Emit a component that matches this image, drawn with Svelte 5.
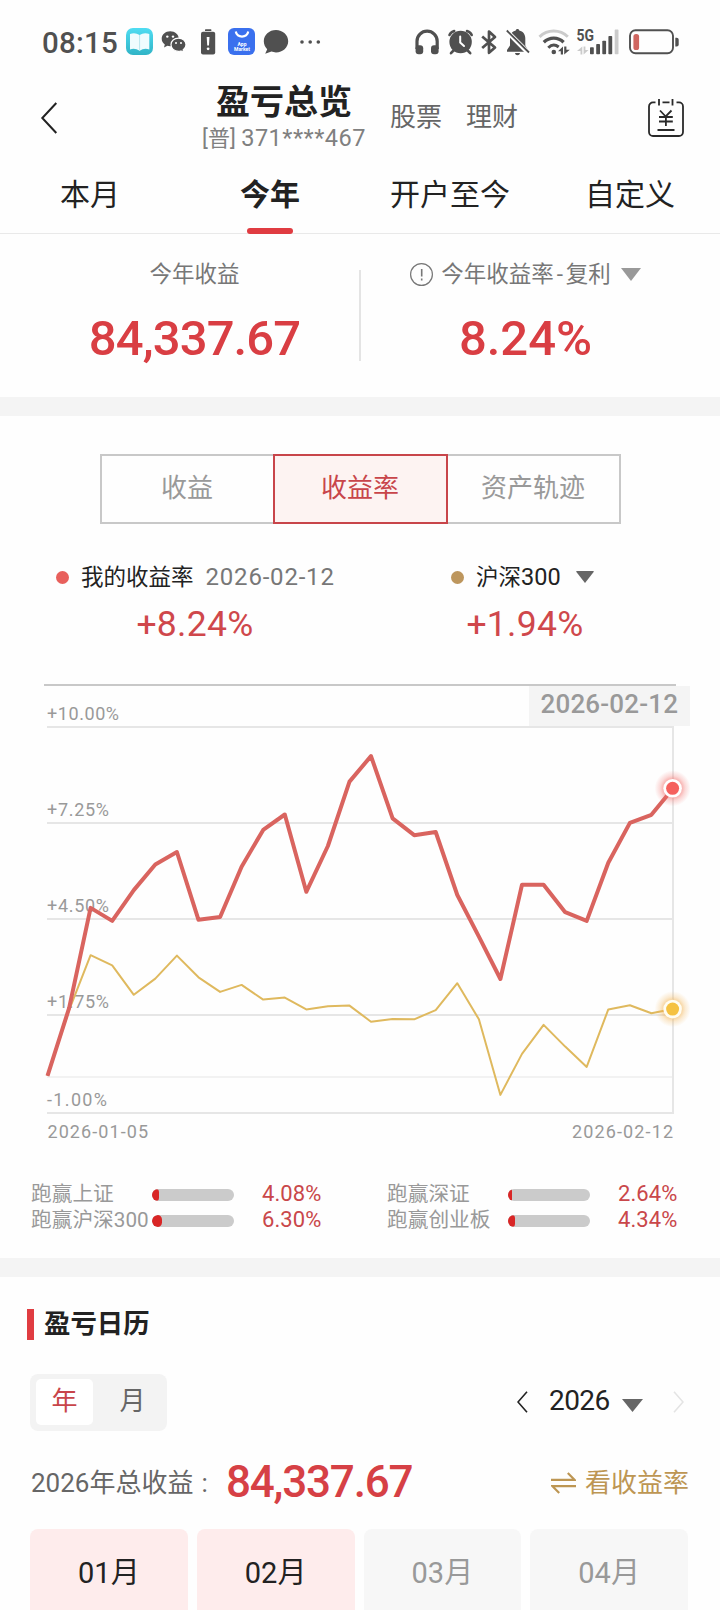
<script lang="ts">
	interface Beat {
		label: string;
		value: number;
	}

	interface Month {
		label: string;
		active: boolean;
	}

	const tabs = ['本月', '今年', '开户至今', '自定义'];
	let activeTab = $state('今年');

	const modes = ['收益', '收益率', '资产轨迹'];
	let activeMode = $state('收益率');

	const units = ['年', '月'];
	let activeUnit = $state('年');

	const beats: Beat[] = [
		{ label: '跑赢上证', value: 4.08 },
		{ label: '跑赢深证', value: 2.64 },
		{ label: '跑赢沪深300', value: 6.3 },
		{ label: '跑赢创业板', value: 4.34 }
	];

	const months: Month[] = [
		{ label: '01', active: true },
		{ label: '02', active: true },
		{ label: '03', active: false },
		{ label: '04', active: false }
	];

	// Daily cumulative return, in percent
	const mine = [
		0.03, 1.97, 4.83, 4.46, 5.34, 6.07, 6.43, 4.49, 4.57, 6.01, 7.06, 7.5, 5.29, 6.6, 8.44,
		9.17, 7.39, 6.91, 7.0, 5.2, 4.01, 2.8, 5.49, 5.49, 4.71, 4.46, 6.12, 7.26, 7.49, 8.24
	];
	const index = [
		0.03, 1.91, 3.48, 3.19, 2.35, 2.81, 3.47, 2.85, 2.43, 2.63, 2.21, 2.27, 1.93, 2.02, 2.04,
		1.58, 1.66, 1.65, 1.91, 2.68, 1.65, -0.51, 0.66, 1.49, 0.87, 0.29, 1.93, 2.05, 1.82, 1.94
	];

	// Chart geometry
	const left = 47.5;
	const right = 673;
	const zeroY = 393;
	const perPercent = 35;

	const grid = [
		{ y: 43, label: '+10.00%', width: 72 },
		{ y: 139, label: '+7.25%', width: 62 },
		{ y: 235, label: '+4.50%', width: 62 },
		{ y: 331, label: '+1.75%', width: 62 },
		{ y: 429, label: '-1.00%', width: 60 }
	];

	const px = (i: number) => left + (i * (right - left)) / (mine.length - 1);
	const py = (v: number) => zeroY - v * perPercent;
	const toPoints = (values: number[]) => values.map((v, i) => `${px(i).toFixed(1)},${py(v).toFixed(1)}`).join(' ');

	let minePoints = $derived(toPoints(mine));
	let indexPoints = $derived(toPoints(index));
</script>

<div class="page">
	<div class="status">
		<span class="time">08:15</span>
		<div class="icons">
			<svg width="27" height="30" viewBox="0 0 27 30">
				<defs>
					<linearGradient id="book" x1="0" y1="0" x2="0" y2="1">
						<stop offset="0" stop-color="#4fdcf2" />
						<stop offset="1" stop-color="#30b4c6" />
					</linearGradient>
				</defs>
				<rect y="1" width="27" height="27" rx="7" fill="url(#book)" />
				<path d="M4 7 Q9 5 13.6 8 Q18 5 23.3 7 V22.4 Q18 20.6 13.6 23.8 Q9 20.6 4 22.4Z" fill="#effcfe" />
				<path d="M13.6 8 V23.8" stroke="#b9e6ee" stroke-width="1" />
			</svg>
			<svg width="26" height="30" viewBox="0 0 26 30" fill="#505050">
				<path d="M9.2 4.3C4.4 4.3.7 7.6.7 11.8c0 2.4 1.2 4.4 3.1 5.7L3 20.6l3.4-1.8c.9.2 1.8.4 2.8.4 4.8 0 8.6-3.2 8.6-7.4S14 4.3 9.2 4.3Z" />
				<path d="M17.5 11.2c-4.3 0-7.5 2.8-7.5 6.5s3.2 6.6 7.5 6.6c.9 0 1.7-.1 2.4-.3l2.9 1.6-.7-2.6c1.7-1.2 2.9-3.1 2.9-5.3 0-3.7-3.2-6.5-7.5-6.5Z" stroke="#fff" stroke-width="1.2" />
				<circle cx="6.3" cy="9.6" r="1.2" fill="#fff" />
				<circle cx="12" cy="9.6" r="1.2" fill="#fff" />
				<circle cx="15" cy="16" r="1" fill="#fff" />
				<circle cx="20" cy="16" r="1" fill="#fff" />
			</svg>
			<svg width="25" height="30" viewBox="0 0 25 30" fill="#505050">
				<rect x="10" y="2.3" width="6.4" height="1.8" rx=".6" />
				<rect x="6" y="4.8" width="14.2" height="22.8" rx="2" />
				<path d="M11.7 10h2.8l-.5 8.5h-1.8Z" fill="#fff" />
				<circle cx="13.1" cy="21.8" r="1.4" fill="#fff" />
			</svg>
			<svg width="27" height="30" viewBox="0 0 27 30">
				<rect y="1" width="27" height="27" rx="6" fill="#3a70ee" />
				<path d="M7.8 4.5C8.6 11.3 19.4 11.3 20.2 4.5" fill="none" stroke="#fff" stroke-width="2.2" />
				<text class="tiny" x="14" y="18.5" text-anchor="middle">App</text>
				<text class="tiny" x="14" y="24" text-anchor="middle">Market</text>
			</svg>
			<svg width="26" height="30" viewBox="0 0 26 30" fill="#505050">
				<path d="M13 3C6.2 3 .8 7.9.8 14.2c0 3.3 1.4 6 3.4 8L2.2 26.8l6.2-2.2c1.4.5 3 .8 4.6.8 6.8 0 12.2-5 12.2-11.2S19.8 3 13 3Z" />
			</svg>
			<svg width="26" height="30" viewBox="0 0 26 30" fill="#505050">
				<circle cx="5" cy="15" r="1.8" />
				<circle cx="13.2" cy="15" r="1.8" />
				<circle cx="21.3" cy="15" r="1.8" />
			</svg>
		</div>
		<div class="icons end">
			<svg width="25" height="30" viewBox="0 0 25 30" fill="#505050">
				<path d="M2 22V14.2a10 10 0 0 1 20.2 0V22" fill="none" stroke="#505050" stroke-width="3.2" />
				<rect x=".6" y="18.2" width="7.6" height="9" rx="3" />
				<rect x="16" y="18.2" width="7.6" height="9" rx="3" />
			</svg>
			<svg width="25" height="30" viewBox="0 0 25 30">
				<g stroke="#505050" stroke-width="2.6" stroke-linecap="round" fill="none">
					<path d="M1.5 8A7 7 0 0 1 6.2 4M19 4a7 7 0 0 1 4.7 4M5.5 23.5 3 26.2M19.7 23.5l2.5 2.7" />
				</g>
				<circle cx="12.6" cy="15" r="11.2" fill="#505050" />
				<path d="M12.2 9.5V15.6L16 19" fill="none" stroke="#fff" stroke-width="2" stroke-linecap="round" />
			</svg>
			<svg width="16" height="30" viewBox="0 0 16 30">
				<path d="M1.2 9.5 14 20.5 8 25.8V4.5L14 10 1.2 21" fill="none" stroke="#505050" stroke-width="2.7" stroke-linejoin="round" />
			</svg>
			<svg width="25" height="30" viewBox="0 0 25 30" fill="#505050">
				<path d="M12.5 2c1 0 1.7.7 1.7 1.6 4 .9 6.1 4 6.1 8V18.5l2.6 4.5v1.8H2v-1.8l3-4.5V11.6c0-4 2-7.1 5.8-8C10.8 2.7 11.5 2 12.5 2ZM10 26h5c-.3 1.5-1.2 2.2-2.5 2.2S10.3 27.5 10 26Z" />
				<path d="M1.5 4 23.5 26" stroke="#fff" stroke-width="4.6" />
				<path d="M1.8 3.5 24 25.5" stroke="#505050" stroke-width="1.8" />
			</svg>
			<svg width="32" height="30" viewBox="0 0 32 30" fill="none">
				<path d="M1.5 9.8C9.5 2.2 22 2.2 29.8 9.8" stroke="#cbcbcb" stroke-width="3" />
				<path d="M5.8 15.3C11.5 9.8 20 9.8 25.6 15.3" stroke="#505050" stroke-width="3.3" />
				<path d="M10.3 20.8C13.5 17.5 17.5 17.5 20.7 20" stroke="#505050" stroke-width="3" />
				<circle cx="15.8" cy="25" r="2.3" fill="#505050" />
				<path d="M20 24.2 25 19.5V27.5H22.8V24.2ZM26.2 19.5H28.4V22.8H31.8L26.2 27.6Z" fill="#505050" />
			</svg>
			<svg width="41" height="30" viewBox="0 0 41 30">
				<text class="net" x="-1.5" y="14" textLength="17.5" lengthAdjust="spacingAndGlyphs">5G</text>
				<path d="M-1 24 4.3 19.5V27.5H2.5V24ZM5.6 19.5H7.4V23H10.5L5.6 27.5Z" fill="#cbcbcb" />
				<g fill="#505050">
					<rect x="12" y="20.3" width="3.8" height="7" rx=".8" />
					<rect x="18.2" y="17" width="3.8" height="10.3" rx=".8" />
					<rect x="24.3" y="13.7" width="3.8" height="13.6" rx=".8" />
					<rect x="30.4" y="9" width="3.8" height="18.3" rx=".8" />
				</g>
				<rect x="36.7" y="2.6" width="3.8" height="24.7" rx=".8" fill="#cbcbcb" />
			</svg>
			<svg width="53" height="30" viewBox="0 0 53 30">
				<rect x="3" y="3.3" width="43" height="23" rx="5.5" fill="none" stroke="#505050" stroke-width="1.9" />
				<rect x="6.4" y="7" width="5.7" height="16" rx="2.6" fill="#cf6660" />
				<path d="M48.3 10.8h1.4a2 2 0 0 1 2 2v4.8a2 2 0 0 1-2 2h-1.4Z" fill="#505050" />
			</svg>
		</div>
	</div>

	<header class="header">
		<svg width="18" height="34" viewBox="0 0 18 34">
			<path d="M16.3 2 2.3 17 16.3 32" fill="none" stroke="#222" stroke-width="2" />
		</svg>
		<div class="heading">
			<h1>盈亏总览</h1>
			<span class="account">[普] <span class="digits">371****467</span></span>
		</div>
		<nav class="links">
			<span>股票</span>
			<span>理财</span>
		</nav>
		<svg class="bill" width="36" height="38" viewBox="0 0 36 38" fill="none" stroke="#2a2a2a" stroke-width="1.8">
			<path d="M7.5 3.4H5A4 4 0 0 0 1 7.4V33a4 4 0 0 0 4 4H31a4 4 0 0 0 4-4V7.4a4 4 0 0 0-4-4H28.5M14.5 3.4H21.5" />
			<path d="M11 0V6.5M24.5 0V6.5M12 11.5 17.7 17.5 23.5 11.5M11 18H24.8M11 22.5H24.8M17.9 17.5V27M9.5 31H26.5" />
		</svg>
	</header>

	<div class="tabs">
		{#each tabs as tab}
			<button class="tab" class:active={tab === activeTab} onclick={() => (activeTab = tab)}>{tab}</button>
		{/each}
	</div>

	<section class="summary">
		<div class="metric">
			<div class="metric-label">今年收益</div>
			<div class="metric-value">84,337.67</div>
		</div>
		<div class="divider"></div>
		<div class="metric">
			<div class="metric-label">
				<svg class="info" width="23" height="23" viewBox="0 0 23 23" fill="none" stroke="#777">
					<circle cx="11.5" cy="11.5" r="10.9" stroke-width="1.2" />
					<path d="M11.7 6V13.5M11.7 15.5V17.5" stroke-width="1.6" />
				</svg>
				<span>今年收益率<span class="dash">-</span>复利</span>
				<svg class="caret" width="20" height="13" viewBox="0 0 20 13"><path d="M0 0H20L10 13Z" fill="#999" /></svg>
			</div>
			<div class="metric-value rate">8.24%</div>
		</div>
	</section>

	<div class="band"></div>

	<section class="returns">
		<div class="segments">
			{#each modes as mode}
				<button class="segment" class:active={mode === activeMode} onclick={() => (activeMode = mode)}>{mode}</button>
			{/each}
		</div>

		<div class="legend">
			<div class="series">
				<div class="series-name">
					<span class="dot mine"></span>
					<span>我的收益率</span>
					<span class="series-date">2026-02-12</span>
				</div>
				<div class="series-value">+8.24%</div>
			</div>
			<div class="series">
				<div class="series-name other">
					<span class="dot index"></span>
					<span>沪深<span class="code">300</span></span>
					<svg width="18" height="12" viewBox="0 0 18 12"><path d="M0 .5 1 0H17L18 .5 9 12Z" fill="#666" /></svg>
				</div>
				<div class="series-value">+1.94%</div>
			</div>
		</div>

		<svg class="chart" width="720" height="470" viewBox="0 0 720 470">
			<defs>
				<radialGradient id="glow-red">
					<stop offset=".45" stop-color="#f26a66" stop-opacity=".6" />
					<stop offset=".7" stop-color="#f26a66" stop-opacity=".25" />
					<stop offset="1" stop-color="#f26a66" stop-opacity="0" />
				</radialGradient>
				<radialGradient id="glow-gold">
					<stop offset=".45" stop-color="#f2b04c" stop-opacity=".6" />
					<stop offset=".7" stop-color="#f2b04c" stop-opacity=".25" />
					<stop offset="1" stop-color="#f2b04c" stop-opacity="0" />
				</radialGradient>
			</defs>
			<rect x="44" y="0" width="632" height="2" fill="#c8c8c8" />
			{#each grid as line}
				<rect x="47" y={line.y - 1} width="626" height="2" fill="#e6e6e6" />
				<text class="axis" x="47" y={line.y - 7} textLength={line.width}>{line.label}</text>
			{/each}
			<rect x="47" y="392" width="626" height="2" fill="#f2f2f2" />
			<rect x="672" y="42" width="2" height="388" fill="#e6e6e6" />
			<text class="axis" x="47.5" y="453.5" textLength="100.5">2026-01-05</text>
			<text class="axis" x="572" y="453.5" textLength="101">2026-02-12</text>

			<polyline points={indexPoints} fill="none" stroke="#dfb95e" stroke-width="2" stroke-linejoin="round" />
			<polyline points={minePoints} fill="none" stroke="#d9645f" stroke-width="4" stroke-linejoin="round" />

			<rect x="529" y="2" width="161" height="40" fill="#f4f4f4" />
			<text class="flag" x="540.5" y="29" textLength="137.5">2026-02-12</text>

			<circle cx="672.6" cy={py(8.24) - 0.3} r="18" fill="url(#glow-red)" />
			<circle cx="672.6" cy={py(8.24) - 0.3} r="9.3" fill="#fff" />
			<circle cx="672.6" cy={py(8.24) - 0.3} r="6.5" fill="#f5605d" />
			<circle cx="672.6" cy={py(1.94)} r="18" fill="url(#glow-gold)" />
			<circle cx="672.6" cy={py(1.94)} r="9.3" fill="#fffdf2" />
			<circle cx="672.6" cy={py(1.94)} r="6.5" fill="#f5c242" />
		</svg>

		<div class="beats">
			{#each beats as beat}
				<div class="beat">
					<span class="beat-label">{beat.label}</span>
					<div class="track"><div class="fill" style="width: {beat.value * 2}%"></div></div>
					<span class="beat-value">{beat.value.toFixed(2)}%</span>
				</div>
			{/each}
		</div>
	</section>

	<div class="band"></div>

	<section class="calendar">
		<h2><span>盈亏日历</span></h2>

		<div class="controls">
			<div class="toggle">
				{#each units as unit}
					<button class="unit" class:active={unit === activeUnit} onclick={() => (activeUnit = unit)}>{unit}</button>
				{/each}
			</div>
			<div class="year">
				<svg width="11" height="22" viewBox="0 0 11 22"><path d="M10 .8 1 11 10 21.2" fill="none" stroke="#222" stroke-width="1.6" /></svg>
				<span class="year-text">2026</span>
				<svg class="year-caret" width="21" height="13" viewBox="0 0 21 13"><path d="M0 0H21L10.5 13Z" fill="#666" /></svg>
				<svg class="next" width="11" height="22" viewBox="0 0 11 22"><path d="M1 .8 10 11 1 21.2" fill="none" stroke="#e4e4e4" stroke-width="1.6" /></svg>
			</div>
		</div>

		<div class="total">
			<span class="total-label">2026年总收益<span class="colon">:</span></span>
			<span class="total-value">84,337.67</span>
			<span class="switch">
				<svg width="25" height="22" viewBox="0 0 25 22" fill="none" stroke="#bd9653" stroke-width="2.2">
					<path d="M0 7.8H23.5L16.8 1M25 14.2H1.5L8.2 21" />
				</svg>
				<span>看收益率</span>
			</span>
		</div>

		<div class="months">
			{#each months as month}
				<div class="month" class:active={month.active}>{month.label}月</div>
			{/each}
		</div>
	</section>
</div>

<style>
	:global(body) {
		margin: 0;
		background: #fefefe;
	}

	.page {
		width: 720px;
		height: 1610px;
		overflow: hidden;
		background: #fefefe;
		color: #222;
		font-family: Roboto, 'Noto Sans CJK SC', sans-serif;
	}

	svg {
		display: block;
		flex-shrink: 0;
	}

	button {
		padding: 0;
		border: none;
		background: none;
		color: inherit;
		font: inherit;
	}

	h1,
	h2 {
		margin: 0;
	}

	/* Status bar */
	.status {
		display: flex;
		align-items: flex-start;
		height: 80px;
		padding: 27px 40px 0 42px;
		box-sizing: border-box;
	}

	.time {
		width: 84px;
		line-height: 32px;
		font-size: 29.5px;
		font-weight: 500;
		letter-spacing: 0.2px;
		color: #505050;
	}

	.icons {
		display: flex;
		gap: 8px;
	}

	.icons.end { margin-left: auto; }

	.icons svg { overflow: visible; }

	.tiny {
		fill: #fff;
		font-size: 5px;
		font-weight: 700;
	}

	.net {
		fill: #505050;
		font-size: 16px;
		font-weight: 700;
	}

	/* Header */
	.header {
		display: flex;
		align-items: center;
		height: 76px;
		padding: 0 36px 0 40px;
	}

	.heading {
		display: flex;
		flex-direction: column;
		align-items: center;
		width: 168px;
		margin-left: 142px;
		padding-top: 2px;
		white-space: nowrap;
	}

	h1 {
		line-height: 38px;
		font-size: 34px;
		font-weight: 700;
	}

	.account {
		line-height: 34px;
		font-size: 22px;
		color: #808080;
	}

	.digits {
		font-size: 23.5px;
		letter-spacing: 0.5px;
	}

	.links {
		display: flex;
		gap: 24px;
		margin-left: 22px;
		padding-bottom: 7px;
		font-size: 26px;
		color: #666;
	}

	.bill { margin-left: auto; }

	.tabs {
		display: grid;
		grid-template-columns: repeat(4, 1fr);
		height: 77px;
		border-bottom: 1px solid #e9e9e9;
	}

	.tab {
		display: flex;
		flex-direction: column;
		align-items: center;
		justify-content: space-between;
		height: 78px;
		line-height: 77px;
		font-size: 30px;
	}

	.tab.active { font-weight: 700; }

	.tab.active::after {
		content: '';
		width: 46px;
		height: 6px;
		margin-top: -5px;
		border-radius: 3px;
		background: #e03c41;
	}

	/* Summary */
	.summary {
		display: flex;
		height: 163px;
		padding: 0 30px;
		box-sizing: border-box;
	}

	.metric {
		flex: 1;
		padding-top: 20px;
		text-align: center;
	}

	.metric-label {
		display: flex;
		align-items: center;
		justify-content: center;
		height: 40px;
		line-height: 38px;
		padding-bottom: 1px;
		box-sizing: border-box;
		font-size: 22.5px;
		color: #777;
	}

	.info {
		margin-top: 1px;
		margin-right: 8px;
	}

	.caret {
		margin-top: 1px;
		margin-left: 10px;
	}

	.dash { padding: 0 3px; }

	.metric-value {
		height: 60px;
		margin-top: 15px;
		line-height: 60px;
		font-size: 49px;
		font-weight: 500;
		letter-spacing: -0.9px;
		color: #d93e43;
	}

	.metric-value.rate { letter-spacing: 0; }

	.divider {
		width: 2px;
		height: 91px;
		margin-top: 36px;
		background: #e4e4e4;
	}

	.band {
		height: 19px;
		background: #f4f4f4;
	}

	/* Returns */
	.returns {
		height: 842px;
		padding-top: 38px;
		box-sizing: border-box;
	}

	.segments {
		display: grid;
		grid-template-columns: 173px 175px 173px;
		justify-content: center;
		height: 70px;
	}

	.segment {
		padding-bottom: 7px;
		border: 2px solid #c8c8c8;
		font-size: 26px;
		color: #999;
	}

	.segment:first-child { border-right: none; }

	.segment:last-child { border-left: none; }

	.segment.active {
		border-color: #c8454a;
		background: #fdf3f2;
		color: #c8454a;
	}

	.legend {
		display: grid;
		grid-template-columns: 330px 330px;
		justify-content: center;
		height: 160px;
		padding-top: 33px;
		box-sizing: border-box;
	}

	.series-name {
		display: flex;
		align-items: center;
		height: 40px;
		line-height: 38px;
		padding-left: 26px;
		font-size: 22.5px;
		white-space: nowrap;
	}

	.series-name.other { padding-left: 91px; }

	.series-name svg { margin-left: 15px; }

	.code { font-size: 23.5px; }

	.dot {
		width: 13px;
		height: 13px;
		margin-right: 12px;
		border-radius: 50%;
	}

	.dot.mine { background: #e8605c; }
	.dot.index { background: #bd965d; }

	.series-date {
		margin-left: 12px;
		font-size: 24px;
		letter-spacing: 0.8px;
		color: #777;
	}

	.series-value {
		line-height: 54px;
		font-size: 35.5px;
		letter-spacing: 0.3px;
		text-align: center;
		color: #cf474b;
	}

	.axis {
		fill: #999;
		font-size: 18px;
	}

	.flag {
		fill: #999;
		font-size: 26px;
		font-weight: 500;
	}

	.beats {
		display: grid;
		grid-template-columns: 356px 356px;
		padding: 27px 0 0 31px;
	}

	.beat {
		display: flex;
		align-items: center;
		height: 26px;
		line-height: 26px;
		white-space: nowrap;
	}

	.beat-label {
		width: 121px;
		font-size: 20.7px;
		color: #999;
	}

	.track {
		width: 82px;
		height: 12px;
		margin-top: 2px;
		overflow: hidden;
		border-radius: 6px;
		background: #cbcbcb;
	}

	.fill {
		height: 100%;
		border-radius: 6px 5px 5px 6px;
		background: #d92626;
	}

	.beat-value {
		margin-left: 28px;
		font-size: 22px;
		letter-spacing: 0.1px;
		color: #c9474a;
	}

	/* Calendar */
	.calendar {
		padding-top: 27px;
	}

	h2 {
		display: flex;
		align-items: center;
		height: 40px;
		padding-left: 27px;
		font-size: 26.4px;
		font-weight: 700;
	}

	h2 span { padding-bottom: 5px; }

	h2::before {
		content: '';
		width: 7px;
		height: 31px;
		margin-right: 10px;
		background: #e03c41;
	}

	.controls {
		display: flex;
		align-items: center;
		justify-content: space-between;
		margin-top: 30px;
		padding: 0 36px 0 30px;
	}

	.toggle {
		display: flex;
		gap: 11px;
		width: 137px;
		height: 57px;
		padding: 5px 6px 6px;
		box-sizing: border-box;
		border-radius: 8px;
		background: #f3f3f3;
	}

	.unit {
		width: 57px;
		padding-bottom: 7px;
		border-radius: 5px;
		font-size: 26px;
		color: #666;
	}

	.unit.active {
		background: #fff;
		color: #c8454a;
	}

	.year {
		display: flex;
		align-items: center;
		padding-bottom: 2px;
	}

	.year-text {
		width: 73px;
		margin-left: 21px;
		padding-bottom: 2px;
		font-size: 28px;
		letter-spacing: -0.6px;
	}

	.year-caret { margin-top: 8px; }

	.next { margin-left: 30px; }

	.total {
		display: flex;
		align-items: center;
		height: 56px;
		margin-top: 23px;
		padding: 0 31px;
	}

	.total-label {
		width: 195px;
		padding-bottom: 3px;
		font-size: 26px;
		color: #666;
	}

	.colon { padding-left: 8px; }

	.total-value {
		font-size: 44px;
		font-weight: 500;
		letter-spacing: -1.2px;
		color: #d64045;
	}

	.switch {
		display: flex;
		align-items: center;
		gap: 9px;
		margin-left: auto;
		font-size: 26px;
		color: #bd9653;
	}

	.switch svg { margin-top: 2px; }

	.switch span { padding-bottom: 3px; }

	.months {
		display: grid;
		grid-template-columns: repeat(4, 1fr);
		gap: 9px;
		margin-top: 19px;
		padding: 0 32px 0 30px;
	}

	.month {
		height: 160px;
		border-radius: 8px;
		background: #f7f7f7;
		line-height: 88px;
		font-size: 29px;
		text-align: center;
		color: #999;
	}

	.month.active {
		background: #feecec;
		color: #222;
	}
</style>
